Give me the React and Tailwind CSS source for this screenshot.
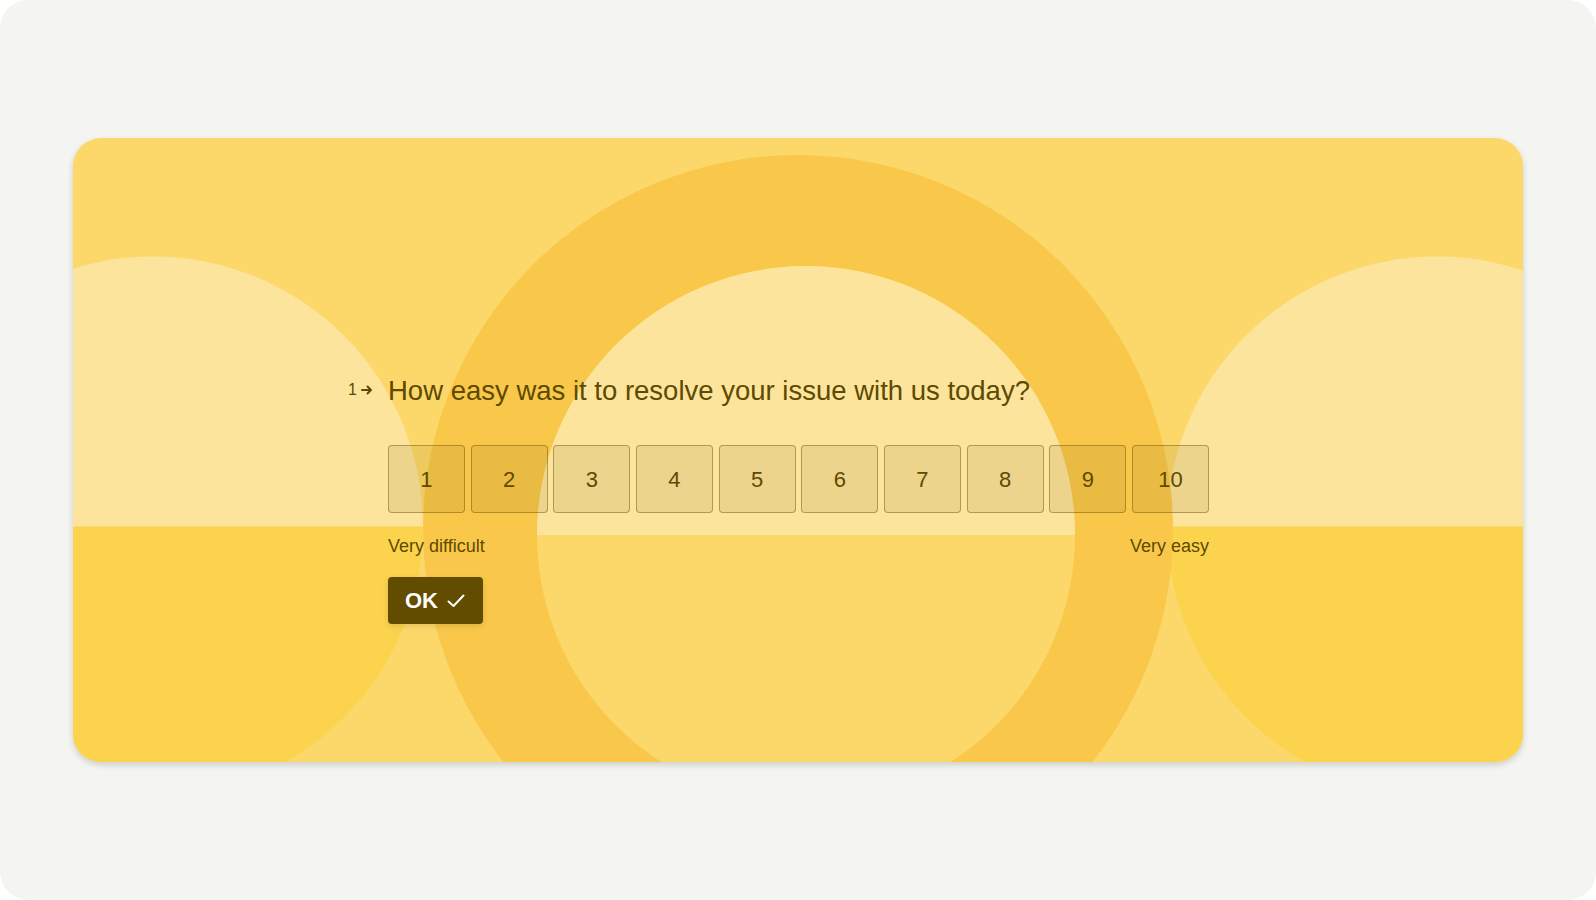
import React from "react";

function half(cx, cy, r, top) {
  return top
    ? `M ${cx - r} ${cy} A ${r} ${r} 0 0 1 ${cx + r} ${cy} Z`
    : `M ${cx - r} ${cy} A ${r} ${r} 0 0 0 ${cx + r} ${cy} Z`;
}

function Decor() {
  const cy = 388.5;
  const r = 270;
  return (
    <svg
      className="absolute inset-0"
      width="1450"
      height="624"
      viewBox="0 0 1450 624"
      aria-hidden="true"
    >
      <rect x="0" y="0" width="1450" height="624" fill="#fcd86b" />
      <path d={half(80, cy, r, true)} fill="#fce49d" />
      <path d={half(80, cy, r, false)} fill="#fcd34d" />
      <path d={half(1364, cy, r, true)} fill="#fce49d" />
      <path d={half(1364, cy, r, false)} fill="#fcd34d" />
      <circle cx="725" cy="392" r="375" fill="#f9c84a" />
      <circle cx="733" cy="397" r="269" fill="#fcd86b" />
      <path d={half(733, 397, 269, true)} fill="#fce49d" />
    </svg>
  );
}

const nums = [1, 2, 3, 4, 5, 6, 7, 8, 9, 10];

export default function App() {
  return (
    <div
      className="w-[1596px] h-[900px] bg-white"
      style={{ fontFamily: '"Liberation Sans", Arial, sans-serif' }}
    >
      <div className="w-full h-full rounded-[28px] bg-[#f4f4f0] flex items-center justify-center">
        <div className="relative w-[1450px] h-[624px] rounded-[28px] overflow-hidden shadow-[0_3px_6px_rgba(0,0,0,0.16)]">
          <Decor />
          <div className="relative pl-[315px] pt-[236px] text-[#5e4a00]">
            <div className="flex items-center -ml-[40px]">
              <div className="w-[40px] flex items-center gap-[4px] -mt-[2px]">
                <span className="text-[16px] leading-[20px]">1</span>
                <svg width="12" height="10" viewBox="0 0 12 10" fill="none">
                  <path
                    d="M1 5h9M6.5 1.5L10 5l-3.5 3.5"
                    stroke="#5e4a00"
                    strokeWidth="2"
                    strokeLinecap="round"
                    strokeLinejoin="round"
                  />
                </svg>
              </div>
              <h1 className="text-[27.5px] leading-[34px] font-normal">
                How easy was it to resolve your issue with us today?
              </h1>
            </div>

            <div className="mt-[37px] w-[821px] grid grid-cols-10 gap-[5.7px]">
              {nums.map((n) => (
                <div
                  key={n}
                  className="h-[68px] rounded-[4px] border border-[rgba(94,74,0,0.42)] bg-[rgba(94,74,0,0.1)] flex items-center justify-center text-[22px]"
                >
                  {n}
                </div>
              ))}
            </div>

            <div className="mt-[21px] w-[821px] flex justify-between text-[18px] leading-[24px]">
              <span>Very difficult</span>
              <span>Very easy</span>
            </div>

            <button className="mt-[19px] w-[95px] h-[47px] rounded-[4px] bg-[#614c00] text-white font-bold text-[22px] flex items-center pl-[17px] gap-[9px] shadow-[0_2px_6px_rgba(0,0,0,0.12)]">
              <span>OK</span>
              <svg width="18" height="14" viewBox="0 0 18 14" fill="none">
                <path
                  d="M1.5 7.5L6.5 12L16.5 1.5"
                  stroke="white"
                  strokeWidth="2"
                  strokeLinecap="round"
                  strokeLinejoin="round"
                />
              </svg>
            </button>
          </div>
        </div>
      </div>
    </div>
  );
}
